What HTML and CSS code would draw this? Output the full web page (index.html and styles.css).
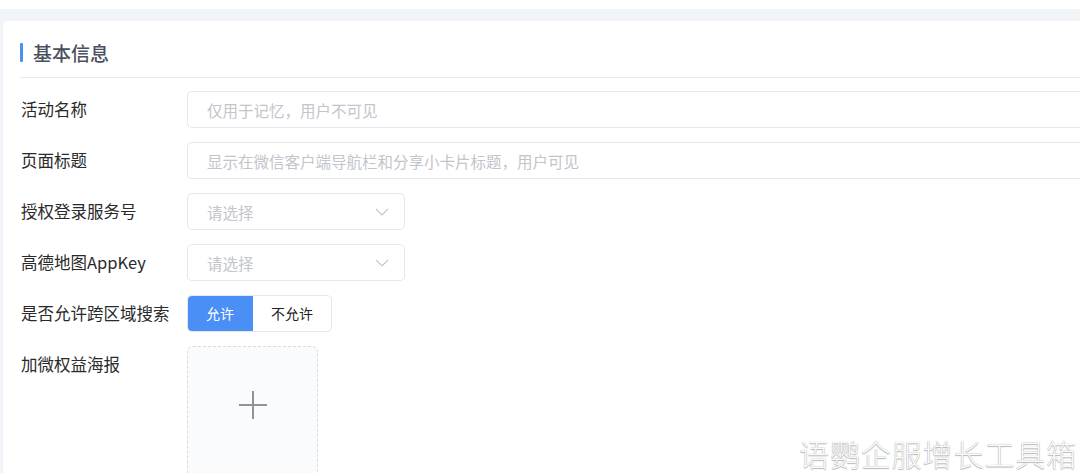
FILE: index.html
```html
<!DOCTYPE html>
<html lang="zh">
<head>
<meta charset="utf-8">
<link rel="stylesheet" href="styles.css">
</head>
<body>
<div class="topbar"></div>
<div class="page">
  <div class="card">
    <div class="section-title"><span class="bar"></span><span class="title-text">基本信息</span></div>
    <div class="form">
      <div class="row">
        <div class="label">活动名称</div>
        <div class="input wide"><span class="ph">仅用于记忆，用户不可见</span></div>
      </div>
      <div class="row">
        <div class="label">页面标题</div>
        <div class="input wide"><span class="ph">显示在微信客户端导航栏和分享小卡片标题，用户可见</span></div>
      </div>
      <div class="row">
        <div class="label">授权登录服务号</div>
        <div class="input select"><span class="ph">请选择</span>
          <svg class="chev" width="14" height="8" viewBox="0 0 14 8"><path d="M1 1 L7 7 L13 1" fill="none" stroke="#c4c8d0" stroke-width="1.2"/></svg>
        </div>
      </div>
      <div class="row">
        <div class="label">高德地图AppKey</div>
        <div class="input select"><span class="ph">请选择</span>
          <svg class="chev" width="14" height="8" viewBox="0 0 14 8"><path d="M1 1 L7 7 L13 1" fill="none" stroke="#c4c8d0" stroke-width="1.2"/></svg>
        </div>
      </div>
      <div class="row">
        <div class="label">是否允许跨区域搜索</div>
        <div class="seg">
          <div class="seg-btn active">允许</div>
          <div class="seg-btn">不允许</div>
        </div>
      </div>
      <div class="row">
        <div class="label">加微权益海报</div>
        <div class="upload">
          <svg width="30" height="30" viewBox="0 0 30 30"><path d="M15 1 V29 M1 15 H29" stroke="#8e939c" stroke-width="2" fill="none"/></svg>
        </div>
      </div>
    </div>
  </div>
</div>
<div class="watermark">语鹦企服增长工具箱</div>
</body>
</html>
```
FILE: styles.css
```css
html, body {
  margin: 0;
  padding: 0;
  background: #ffffff;
  overflow: hidden;
  height: 473px;
  font-family: "Noto Sans CJK SC", "Noto Sans", sans-serif;
}
.topbar {
  height: 9px;
  background: #ffffff;
}
.page {
  background: #f1f4f9;
  padding: 12px 0 0 3px;
  height: 452px;
  overflow: hidden;
}
.card {
  background: #ffffff;
  border-radius: 5px 0 0 0;
  width: 1077px;
  padding: 22px 0 0 17px;
  height: 452px;
  box-sizing: border-box;
  overflow: hidden;
}
.section-title {
  display: flex;
  align-items: center;
  height: 19px;
  padding-bottom: 15px;
  border-bottom: 1px solid #e9ebef;
}
.bar {
  width: 3px;
  height: 19px;
  background: #4a8ff6;
  border-radius: 1px;
}
.title-text {
  margin-left: 10px;
  font-size: 19px;
  font-weight: 500;
  color: #4a5060;
  line-height: 19px;
}
.form {
  padding-top: 13px;
  display: flex;
  flex-direction: column;
  gap: 14px;
}
.row {
  display: flex;
  align-items: flex-start;
}
.label {
  width: 166px;
  padding-left: 1px;
  font-size: 16.5px;
  line-height: 37px;
  color: #2a2a2a;
  flex-shrink: 0;
}
.input {
  height: 37px;
  box-sizing: border-box;
  border: 1px solid #e4e7ec;
  border-radius: 5px;
  display: flex;
  align-items: center;
  padding-left: 19px;
  background: #fff;
}
.wide {
  flex: 1;
  border-right: none;
  border-radius: 5px 0 0 5px;
}
.select {
  width: 218px;
  justify-content: space-between;
  padding-right: 15px;
}
.ph {
  font-size: 15.5px;
  color: #c2c5cc;
}
.chev {
  display: block;
}
.seg {
  display: flex;
  height: 37px;
  box-sizing: border-box;
  border: 1px solid #e4e7ec;
  border-radius: 5px;
  overflow: hidden;
}
.seg-btn {
  font-size: 14px;
  line-height: 35px;
  color: #222;
  width: 78px;
  text-align: center;
}
.seg-btn.active {
  background: #4a8ff6;
  color: #fff;
  width: 66px;
  margin: -1px 0 -1px -1px;
  line-height: 37px;
}
.upload {
  width: 131px;
  height: 130px;
  box-sizing: border-box;
  border: 1px dashed #d8dce3;
  border-radius: 6px;
  background: #fafbfd;
  display: flex;
  align-items: center;
  justify-content: center;
  padding-bottom: 12px;
}
.watermark {
  position: absolute;
  left: 799px;
  top: 431px;
  font-size: 30px;
  letter-spacing: 0.9px;
  font-weight: 300;
  color: #fbfbfb;
  text-shadow: 0 0 1px #a0a0a0, 0 1px 1px #b8b8b8;
  white-space: nowrap;
}
```
